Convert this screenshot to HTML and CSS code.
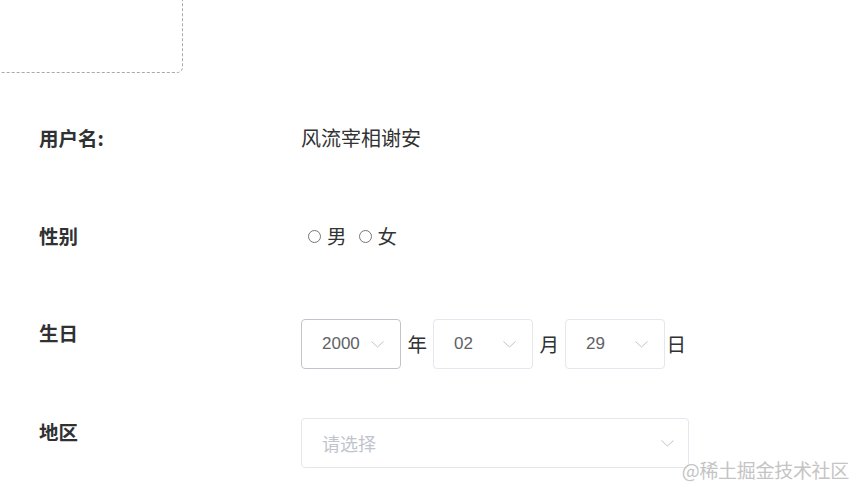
FILE: index.html
```html
<!DOCTYPE html>
<html lang="zh-CN">
<head>
  <meta charset="UTF-8">
  <title>个人资料</title>
  <link rel="stylesheet" href="styles.css">
</head>
<body>
<main class="main">
  <div class="avatar"></div>

  <div class="row">
    <div class="label">用户名:</div>
    <div class="value name">风流宰相谢安</div>
  </div>

  <div class="row short">
    <div class="label">性别</div>
    <div class="value radios">
      <span class="radio"><i class="dot"></i>男</span>
      <span class="radio"><i class="dot"></i>女</span>
    </div>
  </div>

  <div class="row tall">
    <div class="label">生日</div>
    <div class="value dates">
      <div class="select small hover">
        <span>2000</span>
        <svg class="arrow" width="13" height="7" viewBox="0 0 13 7"><polyline points="0.5,0.5 6.5,6 12.5,0.5" fill="none" stroke="#c0c4cc" stroke-width="1"/></svg>
      </div>
      <span class="unit">年</span>
      <div class="select small">
        <span>02</span>
        <svg class="arrow" width="13" height="7" viewBox="0 0 13 7"><polyline points="0.5,0.5 6.5,6 12.5,0.5" fill="none" stroke="#c0c4cc" stroke-width="1"/></svg>
      </div>
      <span class="unit">月</span>
      <div class="select small">
        <span>29</span>
        <svg class="arrow" width="13" height="7" viewBox="0 0 13 7"><polyline points="0.5,0.5 6.5,6 12.5,0.5" fill="none" stroke="#c0c4cc" stroke-width="1"/></svg>
      </div>
      <span class="unit">日</span>
    </div>
  </div>

  <div class="row">
    <div class="label">地区</div>
    <div class="value">
      <div class="select wide">
        <span class="placeholder">请选择</span>
        <svg class="arrow" width="13" height="7" viewBox="0 0 13 7"><polyline points="0.5,0.5 6.5,6 12.5,0.5" fill="none" stroke="#c0c4cc" stroke-width="1"/></svg>
      </div>
    </div>
  </div>
</main>
<div class="watermark">@稀土掘金技术社区</div>
</body>
</html>
```

FILE: styles.css
```css
* {
  margin: 0;
  padding: 0;
  box-sizing: border-box;
}

body {
  font-family: "Noto Sans CJK SC", sans-serif;
  color: #333;
  background: #fff;
  overflow: hidden;
}

.main {
  padding-left: 39px;
}

.avatar {
  width: 189px;
  height: 150px;
  margin-top: -77px;
  margin-left: -45px;
  margin-bottom: 51px;
  border: 1px dashed #a9a9a9;
  border-radius: 6px;
}

.row {
  display: flex;
  align-items: flex-start;
  height: 98px;
}

.row.short {
  height: 97px;
}

.row.tall {
  height: 99px;
}

.label {
  width: 262px;
  font-size: 19.5px;
  line-height: 28px;
  font-weight: bold;
  color: #303133;
}

.value {
  font-size: 19.5px;
  line-height: 28px;
  color: #333;
}

.name {
  font-size: 20px;
}

.radios {
  display: flex;
  gap: 12px;
  padding-left: 7px;
}

.radio {
  display: flex;
  align-items: center;
}

.dot {
  display: inline-block;
  width: 13px;
  height: 13px;
  border: 1px solid #767676;
  border-radius: 50%;
  margin-right: 6px;
}

.dates {
  display: flex;
  align-items: center;
}

.select {
  display: flex;
  align-items: center;
  justify-content: space-between;
  height: 50px;
  padding: 0 16px 0 20px;
  border: 1px solid #e4e7ed;
  border-radius: 4px;
  font-family: "Liberation Sans", "Noto Sans CJK SC", sans-serif;
  font-size: 17px;
  color: #606266;
}

.select.small {
  width: 100px;
}

.select.hover {
  border-color: #c0c4cc;
}

.select.wide {
  width: 388px;
  padding-right: 14px;
}

.placeholder {
  font-family: "Noto Sans CJK SC", sans-serif;
  font-size: 18px;
  color: #c0c4cc;
}

.unit {
  font-size: 19.5px;
  color: #303133;
  margin: 0 6px 0 6.5px;
}

.unit:last-child {
  margin: 0 0 0 1.5px;
}

.watermark {
  position: absolute;
  right: 16px;
  bottom: 14px;
  font-size: 19px;
  color: #c4c4c4;
  letter-spacing: -0.3px;
}
```
